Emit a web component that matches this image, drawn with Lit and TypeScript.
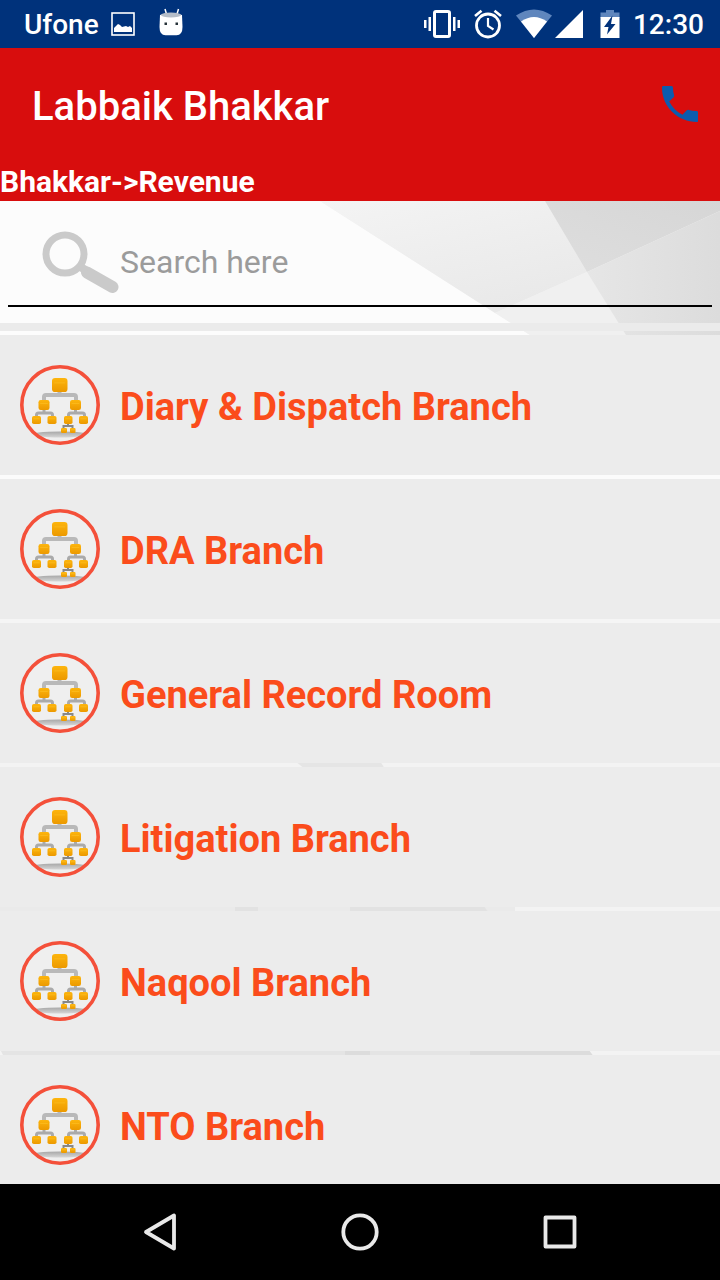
import { LitElement, html, css, svg } from "lit";
import { customElement, property, state } from "lit/decorators.js";

@customElement("status-bar")
class StatusBar extends LitElement {
  static styles = css`
    :host {
      display: flex;
      align-items: center;
      justify-content: space-between;
      height: 48px;
      padding: 0 16px 0 24px;
      background: #00327b;
      color: #fff;
      font: 500 28px/48px Roboto, sans-serif;
    }
    .group {
      display: flex;
      align-items: center;
    }
    .text { padding-top: 2px; line-height: 46px; }
    svg {
      display: block;
      height: 48px;
      fill: #fff;
    }
    .picture { width: 24px; margin-left: 12px; }
    .robot { width: 24px; margin-left: 24px; }
    .vibrate { width: 36px; }
    .alarm { width: 28px; margin-left: 14px; }
    .wifi { width: 36px; margin-left: 14px; }
    .signal { width: 28px; margin-left: 3px; }
    .battery { width: 20px; margin: 0 13px 0 17px; }
    .dim { fill: #5f86bd; }
    .line { fill: none; stroke: #fff; }
  `;

  render() {
    return html`
      <div class="group">
        <span class="text">Ufone</span>
        <svg class="picture" viewBox="0 0 24 48" aria-hidden="true">
          <rect class="line" x="1" y="13" width="22" height="22" stroke-width="1.6" />
          <path d="M3 32v-4l4-4 2 1 2 2 4-1 2 1 2-1 2 2v4z" />
        </svg>
        <svg class="robot" viewBox="0 0 24 48" aria-hidden="true">
          <path class="line" d="M6 9l1.500 5M19.500 9L18 14" stroke-width="1.500" />
          <path d="M1 15q11-4 22 0l.5 12q0 8-6 8.300h-11Q.5 35 .5 27z" />
          <ellipse cx="12" cy="15" rx="10" ry="2.600" fill="#b5bdc8" />
          <path d="M5.500 22.500h2.500v2.500H5.500zM16.500 22.500H19v2.500h-2.500z" fill="#263238" />
        </svg>
      </div>
      <div class="group">
        <svg class="vibrate" viewBox="0 0 36 48" aria-hidden="true">
          <rect class="line" x="10.500" y="11.500" width="15" height="25" rx="1.500" stroke-width="3" />
          <path d="M0 20h2.500v8H0zM4.500 17H7v14H4.500zM29 17h2.500v14H29zM33.500 20H36v8h-2.500z" />
        </svg>
        <svg class="alarm" viewBox="0 0 28 48" aria-hidden="true">
          <circle class="line" cx="14" cy="25.500" r="11.500" stroke-width="2.800" />
          <path class="line" d="M14 18v8l5.500 3.500" stroke-width="2.200" />
          <path class="line" d="M1 16l6.500-5.300M27 16l-6.500-5.300" stroke-width="2.600" />
        </svg>
        <svg class="wifi" viewBox="0 0 36 48" aria-hidden="true">
          <path class="dim" d="M0 15.500q18-12 36 0L18 38z" />
          <path d="M5 21.500q13-9 26 0L18 38z" />
        </svg>
        <svg class="signal" viewBox="0 0 28 48" aria-hidden="true">
          <path d="M28 10v28H0z" />
        </svg>
        <svg class="battery" viewBox="0 0 20 48" aria-hidden="true">
          <path class="dim" d="M6 10h8v2.500h5.500V18H.5v-5.500H6z" />
          <path d="M.5 17h19v21H.5z" />
          <path d="M12.500 15.500L4 27h4.500L7 34.500 15.500 24H11z" fill="#00327b" />
        </svg>
        <time class="text">12:30</time>
      </div>
    `;
  }
}

@customElement("branch-row")
class BranchRow extends LitElement {
  @property() label = "";

  static styles = css`
    :host { display: block; }
    .row {
      display: flex;
      align-items: center;
      gap: 20px;
      width: 100%;
      height: 140px;
      padding: 0 20px;
      border: 0;
      background: #ececec;
      color: #fb4c1b;
      font: 700 38px/48px Roboto, sans-serif;
      text-align: left;
      cursor: pointer;
    }
    svg {
      flex: none;
      width: 80px;
      height: 80px;
    }
    .label { padding-top: 4px; }
  `;

  private box(x: number, y: number, w: number, h: number) {
    return svg`
      <rect x=${x} y=${y} width=${w} height=${h} rx=${w / 5} fill="url(#gold)" />
      <path d="M${x + w * 0.15} ${y + h * 0.35}h${w * 0.7}" stroke="#ffc62b" stroke-width="1" opacity="0.5" />`;
  }

  render() {
    return html`
      <button class="row" type="button">
        <svg viewBox="0 0 80 80" aria-hidden="true">
          <defs>
            <linearGradient id="gold" x2="0" y2="1">
              <stop offset="0" stop-color="#fdb50d" />
              <stop offset="1" stop-color="#ec9900" />
            </linearGradient>
            <linearGradient id="shade" x2="0" y2="1">
              <stop offset="0" stop-color="#a8a8a8" />
              <stop offset="1" stop-color="#d6d6d6" />
            </linearGradient>
            <clipPath id="disc"><circle cx="40" cy="40" r="38" /></clipPath>
          </defs>
          <circle cx="40" cy="40" r="39" fill="#efefef" />
          <ellipse cx="40" cy="69.500" rx="30" ry="3" fill="url(#shade)" clip-path="url(#disc)" />
          <g fill="none" stroke="#b9b9b9">
            <path d="M39.500 26v4M24 36v-4q0-2 2-2h28q2 0 2 2v4" stroke-width="4" />
            <path d="M24 44v4M16.500 53v-3q0-2 2-2h12q2 0 2 2v3M55.500 44v4M48.500 53v-3q0-2 2-2h12q2 0 2 2v3" stroke-width="3" stroke="#aaa" />
            <path d="M48 59v3M43.500 65v-4h9v4" stroke-width="2" stroke="#888" />
          </g>
          ${this.box(32, 13, 15.5, 14)}
          ${this.box(18.500, 35, 11, 10)}${this.box(50, 35, 11, 10)}
          ${this.box(12, 51, 9, 8)}${this.box(27.500, 51, 9, 8)}
          ${this.box(44, 51, 8.500, 8)}${this.box(59, 51, 9, 8)}
          ${this.box(41, 63, 6, 5)}${this.box(50, 63, 5.500, 5)}
          <circle cx="40" cy="40" r="38.200" fill="none" stroke="#f4503a" stroke-width="3.600" />
        </svg>
        <span class="label">${this.label}</span>
      </button>
    `;
  }
}

@customElement("nav-bar")
class NavBar extends LitElement {
  static styles = css`
    :host {
      display: flex;
      justify-content: center;
      gap: 104px;
      height: 96px;
      background: #000;
    }
    button {
      width: 96px;
      padding: 0;
      border: 0;
      background: none;
    }
    svg {
      display: block;
      width: 48px;
      height: 48px;
      margin: 0 auto;
      fill: none;
      stroke: #e9e9e9;
      stroke-width: 3.8;
      stroke-linejoin: round;
    }
  `;

  render() {
    return html`
      <button type="button" aria-label="Back">
        <svg viewBox="0 0 48 48"><path d="M38 7.500v33L10 24z" /></svg>
      </button>
      <button type="button" aria-label="Home">
        <svg viewBox="0 0 48 48"><circle cx="24" cy="24" r="16.700" /></svg>
      </button>
      <button type="button" aria-label="Recent apps">
        <svg viewBox="0 0 48 48"><rect x="9.500" y="9.500" width="29" height="29" /></svg>
      </button>
    `;
  }
}

@customElement("app-root")
class AppRoot extends LitElement {
  @state() private query = "";

  private branches = [
    "Diary & Dispatch Branch",
    "DRA Branch",
    "General Record Room",
    "Litigation Branch",
    "Naqool Branch",
    "NTO Branch",
  ];

  static styles = css`
    :host {
      display: flex;
      flex-direction: column;
      height: 100vh;
      font-family: Roboto, sans-serif;
    }
    header {
      background: #d80d0d;
      color: #fff;
    }
    .toolbar {
      display: flex;
      align-items: center;
      justify-content: space-between;
      height: 112px;
      padding: 0 16px 0 32px;
    }
    h1 {
      margin: 0;
      padding-top: 6px;
      font: 500 40px/48px Roboto, sans-serif;
    }
    .call {
      padding: 0;
      border: 0;
      background: none;
    }
    .call svg {
      display: block;
      width: 48px;
      height: 48px;
      fill: #0d5cae;
    }
    .path {
      margin: 0;
      padding-top: 3px;
      font: 700 30px/38px Roboto, sans-serif;
    }
    main {
      position: relative;
      flex: 1;
      min-height: 0;
      overflow: hidden;
      background: #f3f3f3;
    }
    .backdrop {
      position: absolute;
      inset: 0;
      width: 100%;
      height: 100%;
    }
    .content {
      position: relative;
      display: flex;
      flex-direction: column;
      height: 100%;
    }
    .search {
      display: flex;
      flex: none;
      margin: 0 8px;
      height: 104px;
      border-bottom: 2px solid #000;
    }
    .search svg {
      width: 80px;
      height: 104px;
      margin-left: 32px;
    }
    .search input {
      flex: 1;
      min-width: 0;
      padding: 18px 0 0;
      border: 0;
      outline: 0;
      background: none;
      color: #222;
      font: 400 32px/40px Roboto, sans-serif;
    }
    .search input::placeholder {
      color: #9b9b9b;
      opacity: 1;
    }
    .divider {
      flex: none;
      height: 8px;
      margin: 16px 0 4px;
      background: #ebebeb;
    }
    ul {
      display: flex;
      flex: 1;
      flex-direction: column;
      gap: 4px;
      min-height: 0;
      margin: 0;
      padding: 0;
      overflow-y: auto;
      scrollbar-width: none;
      list-style: none;
    }
    li { flex: none; }
  `;

  render() {
    const shown = this.branches.filter((b) => b.toLowerCase().includes(this.query.toLowerCase()));
    return html`
      <status-bar></status-bar>
      <header>
        <div class="toolbar">
          <h1>Labbaik Bhakkar</h1>
          <button class="call" type="button" aria-label="Call">
            <svg viewBox="0 0 24 24">
              <path d="M6.620 10.790c1.440 2.830 3.760 5.140 6.590 6.590l2.200-2.200c.27-.27.67-.36 1.020-.24 1.120.37 2.330.57 3.570.57.55 0 1 .1 1 .6V20.500c0 .3-.2.5-.5.5C11 21 3 13.400 3 4c0-.55.15-1 .5-1h4.200c.5 0 .8.45.8 1 0 1.250.2 2.450.57 3.570.11.35.03.74-.25 1.020l-2.200 2.200z" />
            </svg>
          </button>
        </div>
        <p class="path">Bhakkar-&gt;Revenue</p>
      </header>
      <main>
        <svg class="backdrop" viewBox="0 0 720 983" preserveAspectRatio="none" aria-hidden="true">
          <defs>
            <linearGradient id="mid" x2="0.6" y2="1">
              <stop offset="0" stop-color="#f4f4f4" />
              <stop offset="1" stop-color="#e9e9e9" />
            </linearGradient>
            <linearGradient id="dark" x1="1" y1="0" x2="0" y2="1">
              <stop offset="0" stop-color="#d6d6d6" />
              <stop offset="1" stop-color="#dedede" />
            </linearGradient>
            <linearGradient id="side">
              <stop offset="0" stop-color="#e6e6e6" />
              <stop offset="1" stop-color="#dcdcdc" />
            </linearGradient>
          </defs>
          <path d="M0 0h320l210 134v144H0z" fill="#fcfcfc" />
          <path d="M320 0h225l42 71-92 41z" fill="url(#mid)" />
          <path d="M495 112l92-41 42 63H530z" fill="#f0f0f0" />
          <path d="M545 0h175v10L587 71z" fill="url(#dark)" />
          <path d="M587 71l133-61v124h-94z" fill="url(#side)" />
          <path d="M0 270h720v12H0z" fill="#fbfbfb" />
          <path d="M0 414h720v12H0z" fill="#f5f5f5" />
          <path d="M295 560h85l5 8h-80z" fill="#e5e5e5" />
          <path d="M0 700h515v15H0z" fill="#eaeaea" />
          <path d="M235 700h23v15h-23zM350 704h133l6 8H350z" fill="#e2e2e2" />
          <path d="M0 848h588l6 8H4z" fill="#e4e4e4" />
          <path d="M345 848h25v8h-25zM470 848h118l6 8H470z" fill="#dcdcdc" />
        </svg>
        <div class="content">
          <div class="search" role="search">
            <svg viewBox="0 0 80 104" aria-hidden="true">
              <circle cx="25" cy="53" r="19" fill="none" stroke="#cacaca" stroke-width="7" />
              <path d="M47 71.500L72.500 86" stroke="#cacaca" stroke-width="12" stroke-linecap="round" />
              <path d="M39 65l8 5" stroke="#cacaca" stroke-width="8" />
            </svg>
            <input
              type="text"
              aria-label="Search here"
              placeholder="Search here"
              .value=${this.query}
              @input=${(e: Event) => (this.query = (e.target as HTMLInputElement).value)}
            />
          </div>
          <div class="divider"></div>
          <ul>
            ${shown.map((b) => html`<li><branch-row .label=${b}></branch-row></li>`)}
          </ul>
        </div>
      </main>
      <nav-bar></nav-bar>
    `;
  }
}
